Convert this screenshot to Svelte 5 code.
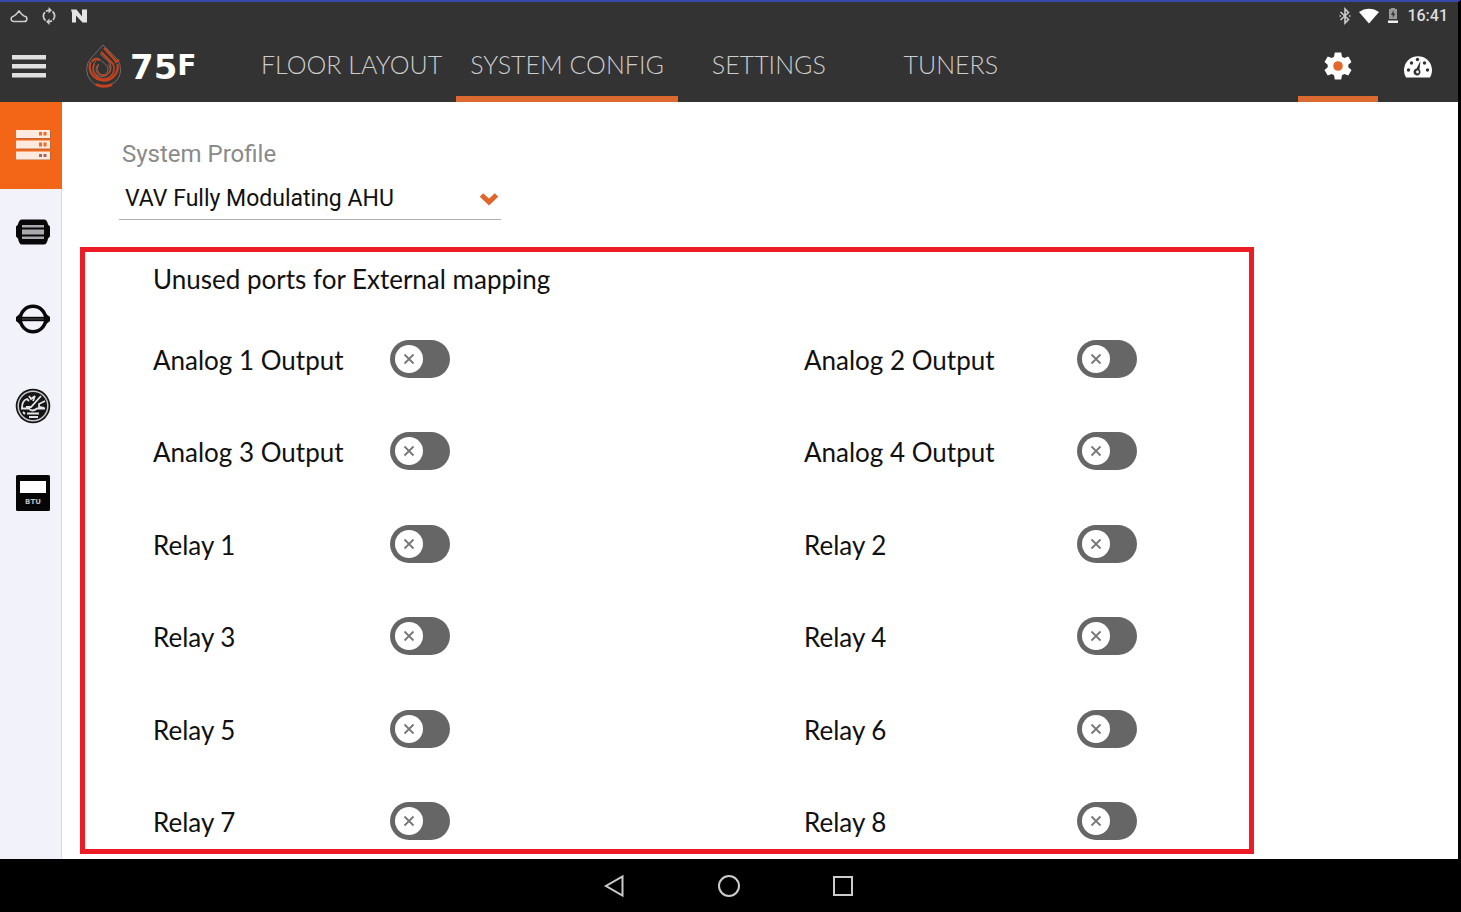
<script lang="ts">
  interface Port {
    id: string
    label: string
    enabled: boolean
  }

  const tabs = ['FLOOR LAYOUT', 'SYSTEM CONFIG', 'SETTINGS', 'TUNERS']
  const profiles = ['VAV Fully Modulating AHU']
  const sections = [
    { id: 'profile', label: 'System profile' },
    { id: 'module', label: 'Module' },
    { id: 'sensor', label: 'Sensor' },
    { id: 'meter', label: 'Energy meter' },
    { id: 'btu', label: 'BTU meter' },
  ]

  let activeTab = $state('SYSTEM CONFIG')
  let activeSection = $state('profile')
  let profile = $state(profiles[0])

  let ports: Port[] = $state([
    ...[1, 2, 3, 4].map((n) => ({ id: `analog-${n}`, label: `Analog ${n} Output`, enabled: false })),
    ...[1, 2, 3, 4, 5, 6, 7, 8].map((n) => ({ id: `relay-${n}`, label: `Relay ${n}`, enabled: false })),
  ])
</script>

<div class="device">
  <header class="top">
    <div class="status-bar">
      <div class="status-group">
        <svg width="18" height="16" viewBox="0 0 18 16" fill="none" stroke="#ccc" stroke-width="1.6">
          <path d="M4 13.500h10a2.600 2.600 0 0 0 .5-5.200L12 6.500 9 3 6 6.500 3.500 8.300a2.600 2.600 0 0 0 .5 5.200z" />
        </svg>
        <svg width="16" height="18" viewBox="0 0 16 18" fill="none" stroke="#ccc" stroke-width="1.8">
          <path d="M4.500 13.500A5.800 5.800 0 0 1 4 5M12 13a5.800 5.800 0 0 0-.5-8.500M5 4.200a6 6 0 0 1 3-.8M11 13.800a6 6 0 0 1-3 .8" />
          <path d="M7.500 0l3.500 3.300-3.500 3.300zM8.500 11.400L5 14.700 8.500 18z" fill="#ccc" stroke="none" />
        </svg>
        <svg width="18" height="16" viewBox="0 0 18 16" fill="#e4e4e4">
          <path d="M1 1.500h5.500l5.500 7v-7h5v13h-4.500L6 7.500v7H2V5z" />
        </svg>
      </div>
      <div class="status-group right">
        <svg width="12" height="18" viewBox="0 0 12 18" fill="none" stroke="#ccc" stroke-width="1.600">
          <path d="M1.500 5l8 7.500L6 16V2l3.500 3.500-8 7.500M.5 9h1.500M10 9h1.500" />
        </svg>
        <svg width="20" height="17" viewBox="0 0 20 17" fill="#fff">
          <path d="M0 4C6-.5 14-.5 20 4L10 15.500z" />
        </svg>
        <svg width="12" height="18" viewBox="0 0 12 18">
          <path d="M2 2h2V1h4v1h2v10H2z" fill="#999" />
          <path d="M6.500 3L4 8h1.800v3L8.300 6.500H6.500z" fill="#333" />
          <path d="M1 13.500h10v2.500H1z" fill="#eee" />
        </svg>
        <span class="clock">16:41</span>
      </div>
    </div>

    <div class="app-bar">
      <button class="icon-btn menu" aria-label="Menu">
        <svg width="34" height="24" viewBox="0 0 34 24" fill="#e0e0e0">
          <path d="M0 1h34v4.500H0zM0 10h34v4.500H0zM0 19h34v4.500H0z" />
        </svg>
      </button>
      <a class="logo" href="#home">
        <svg width="36" height="44" viewBox="0 0 36 44" fill="none" stroke-linecap="butt">
          <g stroke="#766b66" stroke-width="1">
            <path d="M17 1L33 17M17 1L5 14A17 17 0 1 0 31 15" />
            <path d="M14 10l9 8a9 9 0 1 1-13-1M12 14l7 6a6 6 0 1 1-6 0" />
          </g>
          <g stroke="#c8431d" stroke-width="2.200">
            <path d="M18 4l12 13M15 8l12 12" />
            <path d="M5.500 17.500c3-3 5.500-3.500 8-1M29 18.500l4-2.500" />
            <path d="M4.500 18A14 14 0 1 0 31.500 20" />
            <path d="M8.500 19.500A10.500 10.500 0 1 0 26.500 19" stroke-width="1.600" />
            <path d="M12.500 21a6.500 6.500 0 1 0 10-.5" stroke-width="1.300" />
            <path d="M10 40.500q8 3.500 16 0" stroke-width="3" />
          </g>
        </svg>
        <span class="brand">75<span class="brand-unit">F</span></span>
      </a>
      <nav class="tabs">
        {#each tabs as tab}
          <button class="tab" class:active={activeTab === tab} onclick={() => (activeTab = tab)}>{tab}</button>
        {/each}
      </nav>
      <div class="tools">
        <button class="icon-btn tool active" aria-label="Configuration">
          <svg width="28" height="28" viewBox="0 0 28 28">
            <path
              d="M10.800 0.500h6.400l.8 4.200 2.300 1.300 4-1.500 3.200 5.500-3.200 2.700v2.600l3.200 2.700-3.200 5.500-4-1.500-2.300 1.300-.8 4.200h-6.400l-.8-4.200L7.700 22l-4 1.500L.5 18l3.200-2.700v-2.600L.5 10l3.200-5.500 4 1.500L10 4.700z"
              fill="#fff"
            />
            <circle cx="14" cy="14" r="4.800" fill="#e2682b" />
          </svg>
        </button>
        <button class="icon-btn tool" aria-label="Dashboard">
          <svg width="30" height="24" viewBox="0 0 30 24">
            <path d="M3 23.500A14 14 0 1 1 27 23.500z" fill="#fff" />
            <g fill="#333">
              <circle cx="8.500" cy="9" r="1.700" />
              <circle cx="14.500" cy="5.500" r="1.700" />
              <circle cx="21.500" cy="9" r="1.700" />
              <circle cx="5.500" cy="16" r="1.700" />
              <circle cx="24.500" cy="16" r="1.700" />
              <path d="M17.500 7l-1 8.500a3.500 3.500 0 1 1-3-1z" />
            </g>
            <circle cx="14.500" cy="18" r="1.400" fill="#fff" />
          </svg>
        </button>
      </div>
    </div>
  </header>

  <div class="body">
    <aside class="sidebar">
      {#each sections as section}
        <button
          class="icon-btn section"
          class:active={activeSection === section.id}
          aria-label={section.label}
          onclick={() => (activeSection = section.id)}
        >
          <svg width="36" height="36" viewBox="0 0 36 36">
            {#if section.id === 'profile'}
              <g fill="#b9683c"><path d="M2 4h34v8H2zM2 14.500h34v8H2zM2 25h34v8H2z" /></g>
              <g fill="#fde9de"><path d="M1 3h34v8H1zM1 13.500h34v8H1zM1 24.500h34v8H1z" /></g>
              <g fill="#f26a21">
                <path d="M24 5h3v3.500h-3zM28.500 5h3v3.500h-3zM24 15.500h3v4h-3zM28.500 15.500h3v4h-3z" />
              </g>
              <g fill="#a0685a"><path d="M24 27h3v3h-3zM28.500 27h3v3h-3z" /></g>
            {:else if section.id === 'module'}
              <path d="M7 5.500h22q3 0 4 5l2 2v10l-2 2q-1 6-4 6H7q-3 0-4-6l-2-2v-10l2-2q1-5 4-5z" fill="#080808" />
              <path d="M7 11h22v2.500H7zM7 15.500h22v5H7zM7 22.500h22V25H7z" fill="#a9a9ae" />
            {:else if section.id === 'sensor'}
              <circle cx="18" cy="18" r="12.700" fill="none" stroke="#080808" stroke-width="3.400" />
              <path d="M6 12v12l-5-4v-4zM30 12v12l5-4v-4z" fill="#080808" />
              <path d="M5 18h26" stroke="#080808" stroke-width="4.400" />
              <path d="M7 18h22" stroke="#555" stroke-width="1" />
            {:else if section.id === 'meter'}
              <circle cx="18" cy="18" r="17.300" fill="#151515" />
              <circle cx="18" cy="18" r="14.800" fill="none" stroke="#c9c9ce" stroke-width="1.500" />
              <g fill="none" stroke="#e4e4ea" stroke-width="1.800">
                <path d="M7 20c0-6 2-8 5-9l2 2M14 8l2 3 4-3M20 8l-2 5M30 13l-6 3v3l5 1" />
                <path d="M26 8L16 19l-5 0M6 20.500h8q3 4 8 0h8M12 25.500h12M14 29h9M10 26l-2-2" />
              </g>
            {:else}
              <rect x="1" y="0" width="34" height="36" rx="1.500" fill="#050505" />
              <rect x="5" y="6" width="26" height="12" fill="#fff" />
              <text x="18" y="29" text-anchor="middle" class="btu">BTU</text>
            {/if}
          </svg>
        </button>
      {/each}
    </aside>

    <main class="content">
      <div class="profile">
        <label class="profile-label" for="profile">System Profile</label>
        <div class="select-wrap">
          <select id="profile" bind:value={profile}>
            {#each profiles as name}
              <option value={name}>{name}</option>
            {/each}
          </select>
          <svg width="20" height="14" viewBox="0 0 20 14" fill="none" stroke="#e2652a" stroke-width="5">
            <path d="M2.500 3l7.500 7 7.500-7" />
          </svg>
        </div>
      </div>

      <section class="mapping">
        <h2>Unused ports for External mapping</h2>
        <div class="ports">
          {#each ports as port (port.id)}
            <label class="port-label" for={port.id}>{port.label}</label>
            <span class="switch">
              <input id={port.id} type="checkbox" role="switch" bind:checked={port.enabled} />
              <svg class="thumb" width="28" height="28" viewBox="0 0 28 28">
                <circle cx="14" cy="14" r="14" fill="#fff" />
                <path d="M9.500 9.500l9 9M18.500 9.500l-9 9" stroke="#777" stroke-width="1.800" />
              </svg>
            </span>
          {/each}
        </div>
      </section>
    </main>
  </div>

  <footer class="system-nav">
    <button class="icon-btn" aria-label="Back">
      <svg width="24" height="24" viewBox="0 0 24 24"><path d="M19.500 2.500v19L3 12z" /></svg>
    </button>
    <button class="icon-btn" aria-label="Home">
      <svg width="24" height="24" viewBox="0 0 24 24"><circle cx="12" cy="12" r="10" /></svg>
    </button>
    <button class="icon-btn" aria-label="Recent apps">
      <svg width="24" height="24" viewBox="0 0 24 24"><path d="M3 3h18v18H3z" /></svg>
    </button>
  </footer>
</div>

<style>
  :global(body) {
    background: #000;
  }

  .device {
    box-sizing: border-box;
    display: flex;
    flex-direction: column;
    min-height: 100vh;
    border-top: 2px solid #3949ab;
    border-right: 3px solid #000;
    background: #fff;
    color: #111;
    font-family: Lato, sans-serif;
  }

  .icon-btn {
    display: flex;
    align-items: center;
    justify-content: center;
    padding: 0;
    border: none;
    background: none;
    cursor: pointer;
  }

  .top {
    background: #333;
  }

  .status-bar {
    display: flex;
    justify-content: space-between;
    height: 28px;
    padding: 0 10px;
  }

  .status-group {
    display: flex;
    align-items: center;
    gap: 13px;
  }

  .status-group.right {
    gap: 8px;
  }

  .clock {
    color: #ddd;
    font: 500 16px/20px Roboto, sans-serif;
  }

  .app-bar {
    display: flex;
    height: 72px;
  }

  .menu {
    padding: 0 12px;
  }

  .logo {
    display: flex;
    align-items: center;
    gap: 8px;
    width: 161px;
    margin-left: 28px;
    color: #fff;
    text-decoration: none;
  }

  .brand {
    font: bold 34px/36px 'DejaVu Sans', sans-serif;
  }

  .brand-unit {
    font-size: 28px;
    vertical-align: 4px;
  }

  .tabs {
    display: flex;
  }

  .tab {
    min-width: 182px;
    padding: 2px 14px 0;
    border: none;
    border-bottom: 6px solid transparent;
    background: none;
    color: #ccc;
    font: 300 25px/32px Lato, sans-serif;
    white-space: nowrap;
    cursor: pointer;
  }

  .tab.active,
  .tool.active {
    border-bottom-color: #dc6930;
  }

  .tools {
    display: flex;
    margin-left: auto;
  }

  .tool {
    width: 80px;
    padding-top: 6px;
    border-bottom: 6px solid transparent;
  }

  .body {
    display: flex;
    flex: 1;
  }

  .sidebar {
    flex: none;
    width: 61px;
    border-right: 1px solid #d9d9e2;
    background: #f2f2fb;
  }

  .section {
    width: 62px;
    height: 87px;
    padding: 0 0 2px 4px;
  }

  .section.active {
    background: #f36517;
  }

  .btu {
    fill: #bbb;
    font: bold 7px 'DejaVu Sans', sans-serif;
  }

  .content {
    display: flex;
    flex: 1;
    flex-direction: column;
    padding: 36px 204px 5px 18px;
  }

  .profile {
    width: 382px;
    margin: 0 0 27px 39px;
    font-family: Roboto, sans-serif;
  }

  .profile-label {
    display: block;
    padding-left: 3px;
    color: #8a8a8a;
    font-size: 24px;
    line-height: 32px;
  }

  .select-wrap {
    position: relative;
    display: flex;
    margin-top: 8px;
  }

  .select-wrap svg {
    position: absolute;
    top: 14px;
    right: 2px;
    pointer-events: none;
  }

  select {
    flex: 1;
    height: 42px;
    padding: 0 32px 0 6px;
    border: none;
    border-bottom: 1px solid #b0b0b0;
    appearance: none;
    background: none;
    color: #111;
    font: 23px Roboto, sans-serif;
  }

  .mapping {
    display: flex;
    flex: 1;
    flex-direction: column;
    padding: 11px 0 9px 68px;
    border: 5px solid #ed1c24;
  }

  h2 {
    margin: 0 0 45px;
    font-size: 26px;
    font-weight: 400;
    line-height: 32px;
  }

  .ports {
    display: grid;
    flex: 1;
    grid-template-columns: 237fr 414fr 273fr 172fr;
    grid-auto-rows: 38px;
    align-content: space-between;
    align-items: center;
    font-size: 26px;
    line-height: 32px;
  }

  .port-label {
    padding-top: 2px;
  }

  .switch {
    display: grid;
    align-items: center;
    width: 60px;
  }

  .switch > * {
    grid-area: 1 / 1;
  }

  .switch input {
    width: 60px;
    height: 38px;
    margin: 0;
    border-radius: 19px;
    appearance: none;
    background: #666;
    cursor: pointer;
  }

  .thumb {
    margin-left: 5px;
    pointer-events: none;
  }

  .switch input:checked {
    background: #dc6930;
  }

  .switch input:checked + .thumb {
    margin-left: 27px;
  }

  .system-nav {
    display: flex;
    justify-content: center;
    gap: 90px;
    height: 53px;
    background: #000;
  }

  .system-nav svg {
    fill: none;
    stroke: #ccc;
    stroke-width: 2;
  }
</style>
